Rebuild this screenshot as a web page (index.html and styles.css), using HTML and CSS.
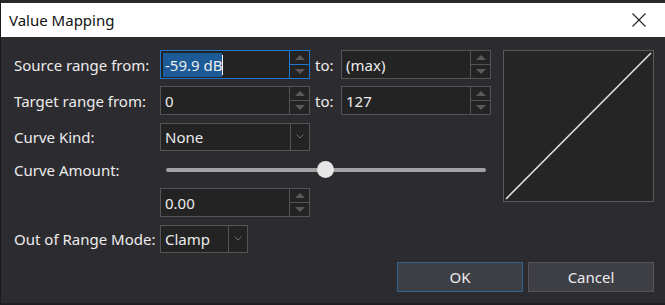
FILE: index.html
```html
<!DOCTYPE html>
<html lang="en">
<head>
  <meta charset="UTF-8">
  <title>Value Mapping</title>
  <link rel="stylesheet" href="styles.css">
</head>
<body>

<div class="dialog">
  <!-- Title bar -->
  <div class="titlebar">
    <span class="title">Value Mapping</span>
    <svg class="close" width="14" height="14" viewBox="0 0 14 14">
      <path d="M0.5 0.5 L13.5 13.5 M13.5 0.5 L0.5 13.5" stroke="#222" stroke-width="1.1" fill="none"/>
    </svg>
  </div>

  <div class="content">
    <div class="form">
      <div class="label">Source range from:</div>
      <div class="spinbox focused">
        <div class="value"><span class="selected">-59.9 dB</span><span class="caret"></span></div>
        <div class="spin"><div class="up"></div><div class="down"></div></div>
      </div>
      <div class="to">to:</div>
      <div class="spinbox">
        <div class="value">(max)</div>
        <div class="spin"><div class="up"></div><div class="down"></div></div>
      </div>

      <div class="label">Target range from:</div>
      <div class="spinbox">
        <div class="value">0</div>
        <div class="spin"><div class="up"></div><div class="down"></div></div>
      </div>
      <div class="to">to:</div>
      <div class="spinbox">
        <div class="value">127</div>
        <div class="spin"><div class="up"></div><div class="down"></div></div>
      </div>

      <div class="label">Curve Kind:</div>
      <div class="combo">
        <div class="value">None</div>
        <div class="drop"><svg width="8" height="5" viewBox="0 0 8 5"><path d="M0.5 0.5 L4 4 L7.5 0.5" stroke="#6e6e6e" fill="none"/></svg></div>
      </div>
      <div></div>
      <div></div>

      <div class="label">Curve Amount:</div>
      <div class="slider">
        <div class="track"></div>
        <div class="thumb" style="left: 157px"></div>
      </div>

      <div></div>
      <div class="spinbox">
        <div class="value">0.00</div>
        <div class="spin"><div class="up"></div><div class="down"></div></div>
      </div>
      <div></div>
      <div></div>

      <div class="label">Out of Range Mode:</div>
      <div class="combo short">
        <div class="value">Clamp</div>
        <div class="drop"><svg width="8" height="5" viewBox="0 0 8 5"><path d="M0.5 0.5 L4 4 L7.5 0.5" stroke="#6e6e6e" fill="none"/></svg></div>
      </div>
    </div>

    <!-- Curve preview -->
    <div class="graph">
      <svg width="149" height="150" viewBox="0 0 149 150">
        <line x1="2" y1="148" x2="147" y2="2" stroke="#e0e0e0" stroke-width="1.6"/>
      </svg>
    </div>
  </div>

  <div class="buttons">
    <button class="btn default">OK</button>
    <button class="btn">Cancel</button>
  </div>
</div>
<div class="bottom-strip"></div>

</body>
</html>
```

FILE: styles.css
```css
/* Dialog base */
body {
  margin: 0;
  background: #1c1c1f;
  font-family: "Noto Sans", "Open Sans", sans-serif;
  color: #ececec;
  width: 665px;
  height: 305px;
  overflow: hidden;
}
.dialog {
  border-top: 3px solid #28272b;
  border-left: 1px solid #1a1a1a;
  background: #2c2b30;
  height: 300px;
}
.titlebar {
  height: 34px;
  background: #ffffff;
  display: flex;
  align-items: center;
  justify-content: space-between;
  padding: 0 19px 0 8px;
  color: #111;
}
.title {
  font-size: 15px;
}
.content {
  display: flex;
  gap: 12px;
  padding: 13px 0 0 13px;
}
.form {
  display: grid;
  grid-template-columns: 146px 150px 31px 150px;
  grid-template-rows: 29px 29px 29px 23px 29px 29px;
  row-gap: 7px;
  align-items: center;
}
.label {
  font-size: 15px;
  white-space: nowrap;
}
.to {
  font-size: 15px;
  padding-left: 5px;
}

/* Spin boxes */
.spinbox, .combo {
  height: 29px;
  box-sizing: border-box;
  border: 1px solid #545454;
  background: #232323;
  display: flex;
  font-size: 15px;
}
.combo { height: 28px; }
.value {
  flex: 1;
  display: flex;
  align-items: center;
  padding-left: 4px;
  white-space: nowrap;
}
.spin {
  width: 19px;
  border-left: 1px solid #545454;
  display: flex;
  flex-direction: column;
}
.spin .up, .spin .down {
  flex: 1;
  display: flex;
  align-items: center;
  justify-content: center;
}
.spin .up { border-bottom: 1px solid #545454; }
.spin .up::after {
  content: "";
  border-left: 5px solid transparent;
  border-right: 5px solid transparent;
  border-bottom: 5px solid #5a5a5a;
}
.spin .down::after {
  content: "";
  border-left: 5px solid transparent;
  border-right: 5px solid transparent;
  border-top: 5px solid #5a5a5a;
}
.focused { border-color: #1f78cf; }
.focused .spin, .focused .spin .up { border-color: #1f78cf; }
.selected {
  background: #1d5b98;
  padding: 2px 0;
  margin-left: -2px;
  padding-left: 2px;
}
.caret {
  width: 1px;
  height: 20px;
  background: #ffffff;
}
.combo .drop {
  width: 18px;
  border-left: 1px solid #545454;
  display: flex;
  align-items: center;
  justify-content: center;
}
.combo.short { width: 88px; }

/* Slider */
.slider {
  grid-column: 2 / 5;
  position: relative;
  height: 23px;
}
.track {
  position: absolute;
  left: 6px;
  right: 5px;
  top: 10px;
  height: 4px;
  border-radius: 2px;
  background: #a2a2a2;
}
.thumb {
  position: absolute;
  top: 3px;
  width: 17px;
  height: 17px;
  border-radius: 50%;
  background: #e6e6e6;
}

/* Graph */
.graph {
  width: 151px;
  height: 152px;
  box-sizing: border-box;
  border: 1px solid #5a5a5a;
  background: #252525;
}
.graph svg { display: block; }

/* Buttons */
.buttons {
  display: flex;
  justify-content: flex-end;
  gap: 5px;
  padding: 9px 11px 0 0;
}
.btn {
  width: 126px;
  height: 30px;
  background: #3e3e45;
  border: 1px solid #55555a;
  color: #ececec;
  font-family: "Noto Sans", "Open Sans", sans-serif;
  font-size: 15px;
}
.btn.default { border-color: #2f6792; }
.bottom-strip {
  height: 2px;
  background: #1f1f22;
}
```
